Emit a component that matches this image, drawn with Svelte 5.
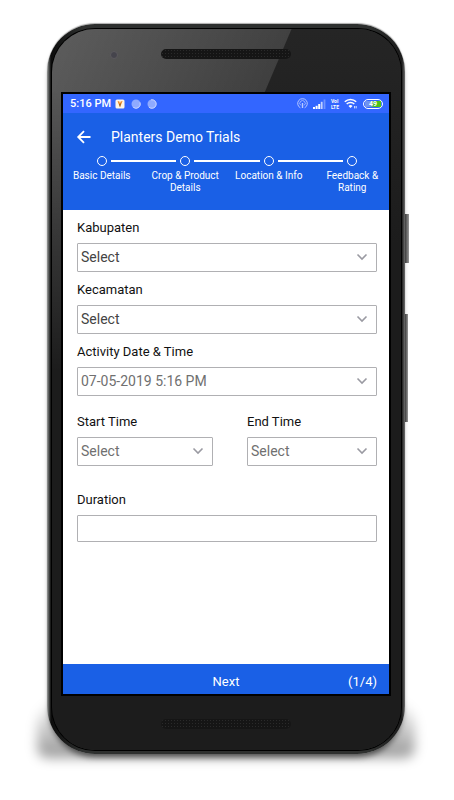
<!--
Planters Demo Trials - activity form, step 1 of 4
Shown inside a phone frame.
-->

<script>
	const steps = ['Basic Details', 'Crop & Product Details', 'Location & Info', 'Feedback & Rating'];

	let kabupaten = $state('Select');
	let kecamatan = $state('Select');
	let activityDate = $state('07-05-2019 5:16 PM');
	let startTime = $state('Select');
	let endTime = $state('Select');
	let duration = $state('');
</script>

{#snippet chevron()}
	<svg class="chevron" width="12" height="8" viewBox="0 0 12 8" aria-hidden="true">
		<path d="M1.5 1.5 6 6l4.5-4.5" fill="none" stroke="#9a9aa2" stroke-width="1.6" />
	</svg>
{/snippet}

<main>
	<div class="phone">
		<span class="side-button power"></span>
		<span class="side-button volume"></span>
		<div class="face">
			<div class="top">
				<span class="camera"></span>
				<span class="speaker"></span>
			</div>

			<div class="screen">
				<div class="status">
					<span class="clock">5:16 PM</span>
					<svg width="10" height="10" viewBox="0 0 10 10" aria-hidden="true">
						<rect x="0.5" y="0.5" width="9" height="9" rx="1.5" fill="#fff5e6" />
						<path d="M2.5 2.2 5 8.2 7.6 2l-2 .4-.6 2-.8-2.2z" fill="#f08a24" />
						<path d="M5 8.2 4.2 5.2l1.6-1z" fill="#7a5a2c" />
					</svg>
					<svg class="ball" width="10" height="10" viewBox="0 0 10 10" aria-hidden="true">
						<circle cx="5" cy="5" r="4.5" fill="#8faaff" />
						<path d="M9 3.4A4.3 4.3 0 0 1 2.4 8.4" fill="none" stroke="#c6d3ff" />
					</svg>
					<svg class="ball" width="10" height="10" viewBox="0 0 10 10" aria-hidden="true">
						<circle cx="5" cy="5" r="4.5" fill="#8faaff" />
						<path d="M4 .8A4.3 4.3 0 1 1 2 8.2" fill="none" stroke="#c6d3ff" />
					</svg>

					<div class="system">
						<svg width="11" height="11" viewBox="0 0 11 11" fill="none" stroke="#b9c9ff" aria-hidden="true">
							<path d="M3.4 9.8a4.8 4.8 0 1 1 4.2 0" />
							<path d="M3.8 7.4a2.7 2.7 0 1 1 3.4 0" stroke-width="0.8" />
							<path d="M5.5 5v5" stroke-width="1.4" />
						</svg>
						<svg width="13" height="10" viewBox="0 0 13 10" fill="#fff" aria-hidden="true">
							<rect x="0" y="8" width="2" height="2" />
							<rect x="2.6" y="6.8" width="2" height="3.2" />
							<rect x="5.2" y="5" width="2" height="5" />
							<rect x="7.8" y="2.8" width="1.8" height="7.2" opacity="0.7" />
							<rect x="10.6" y="0.5" width="1.8" height="9.5" opacity="0.3" />
						</svg>
						<span class="volte"><span>VoI</span><span>LTE</span></span>
						<svg width="14" height="11" viewBox="0 0 14 11" fill="none" stroke="#fff" aria-hidden="true">
							<path d="M.8 3.8a8 8 0 0 1 11.4 0" stroke-width="1.5" />
							<path d="M2.7 6a5.4 5.4 0 0 1 7.6 0" stroke-width="1.4" />
							<path d="M4.5 8a3 3 0 0 1 4 0L6.5 10z" fill="#fff" stroke="none" />
							<path d="M10.6 8v2.4M12.2 8v2.4" stroke-width="0.8" />
						</svg>
						<span class="battery">49</span>
					</div>
				</div>

				<header>
					<div class="title">
						<button class="back" aria-label="Back">
							<svg width="16" height="16" viewBox="0 0 16 16" fill="none" stroke="#fff" stroke-width="1.8">
								<path d="M14.5 8H2.5M8 2.2 2.2 8 8 13.8" />
							</svg>
						</button>
						<h1>Planters Demo Trials</h1>
					</div>
					<ol class="steps">
						{#each steps as step}
							<li>
								<span class="marker"><span class="dot"></span></span>
								<span class="step-label">{step}</span>
							</li>
						{/each}
					</ol>
				</header>

				<form id="details" onsubmit={(e) => e.preventDefault()}>
					<div class="field">
						<label for="kabupaten">Kabupaten</label>
						<div class="control">
							<select id="kabupaten" bind:value={kabupaten}>
								<option>Select</option>
							</select>
							{@render chevron()}
						</div>
					</div>
					<div class="field">
						<label for="kecamatan">Kecamatan</label>
						<div class="control">
							<select id="kecamatan" bind:value={kecamatan}>
								<option>Select</option>
							</select>
							{@render chevron()}
						</div>
					</div>
					<div class="field">
						<label for="activityDate">Activity Date &amp; Time</label>
						<div class="control">
							<select id="activityDate" class="muted" bind:value={activityDate}>
								<option>07-05-2019 5:16 PM</option>
							</select>
							{@render chevron()}
						</div>
					</div>
					<div class="times">
						<div class="field start">
							<label for="startTime">Start Time</label>
							<div class="control">
								<select id="startTime" class="muted" bind:value={startTime}>
									<option>Select</option>
								</select>
								{@render chevron()}
							</div>
						</div>
						<div class="field end">
							<label for="endTime">End Time</label>
							<div class="control">
								<select id="endTime" class="muted" bind:value={endTime}>
									<option>Select</option>
								</select>
								{@render chevron()}
							</div>
						</div>
					</div>
					<div class="field">
						<label for="duration">Duration</label>
						<input id="duration" type="text" bind:value={duration} />
					</div>
				</form>

				<button class="next" type="submit" form="details">
					<span class="next-label">Next</span>
					<span class="count">(1/4)</span>
				</button>
			</div>

			<div class="bottom">
				<span class="speaker"></span>
			</div>
		</div>
	</div>
</main>

<style>
	:global(body) {
		margin: 0;
		background: #fff;
	}

	main {
		display: flex;
		min-height: 100vh;
		box-sizing: border-box;
		padding: 24px 49px 46px 47px;
		font-family: Roboto, 'Liberation Sans', sans-serif;
	}

	/* ---- phone ---- */

	.phone {
		position: relative;
		flex: 1;
		display: flex;
		padding: 5px 4px 4px 5px;
		border-radius: 48px;
		background: linear-gradient(to right, #9a9c9b, #4c4e4d 2px, #0c0c0c 4px, #2e302f 10%, #2e302f 90%, #1c1c1c calc(100% - 3px), #6d6d6d);
		box-shadow:
			0 6px 6px -3px rgba(0, 0, 0, 0.6),
			0 -1px 1px rgba(90, 90, 90, 0.5);
	}

	.phone::before {
		content: '';
		position: absolute;
		z-index: -1;
		right: -10px;
		bottom: -4px;
		left: -10px;
		height: 60px;
		border-radius: 30px 30px 10px 10px;
		background: linear-gradient(rgba(0, 0, 0, 0), rgba(0, 0, 0, 0.4));
		filter: blur(6px);
	}

	.side-button {
		position: absolute;
		z-index: -1;
		left: 100%;
		background: linear-gradient(to right, #444, #999);
	}

	.power {
		top: 190px;
		width: 4px;
		height: 49px;
	}

	.volume {
		top: 290px;
		width: 3px;
		height: 108px;
	}

	.face {
		flex: 1;
		display: flex;
		flex-direction: column;
		padding: 0 10px 0 9px;
		border-radius: 43px;
		box-shadow: 0 0 0 1px #000;
		background:
			linear-gradient(113deg, rgba(255, 255, 255, 0.26) 0, rgba(255, 255, 255, 0.13) 220px, transparent 221px) no-repeat 0 0 / 100% 63px,
			linear-gradient(rgba(255, 255, 255, 0.24), transparent 280px) no-repeat 0 63px / 9px 100%,
			linear-gradient(#252525, #1c1c1c 30%);
	}

	.top {
		display: flex;
		align-items: flex-start;
		height: 63px;
	}

	.camera {
		width: 6px;
		height: 6px;
		margin: 22px 0 0 49px;
		border: 1px solid #5c5a5e;
		border-radius: 50%;
		background: #45444c;
	}

	.speaker {
		width: 130px;
		height: 10px;
		border-radius: 5px;
		background: radial-gradient(#2a2a2a 1px, #151515 1px) 0 0 / 3px 3px;
	}

	.top .speaker {
		margin: 20px 0 0 43px;
	}

	.bottom {
		display: flex;
		justify-content: center;
		height: 54px;
		padding-top: 23px;
		box-sizing: border-box;
	}

	.screen {
		flex: 1;
		display: flex;
		flex-direction: column;
		overflow: hidden;
		border: 2px solid #000;
		background: #fff;
	}

	/* ---- status bar ---- */

	.status {
		display: flex;
		align-items: center;
		height: 19px;
		padding: 0 6px 0 7px;
		background: #3366ff;
		color: #fff;
	}

	.clock {
		margin-right: 4px;
		font-size: 11px;
		font-weight: 500;
		line-height: 12px;
	}

	.ball {
		margin-left: 6px;
	}

	.system {
		display: flex;
		align-items: center;
		gap: 5px;
		margin-left: auto;
	}

	.volte {
		display: flex;
		flex-direction: column;
		font-size: 5px;
		font-weight: 700;
		line-height: 6px;
	}

	.battery {
		width: 18px;
		border: 1px solid #fff;
		border-radius: 5px;
		background: linear-gradient(to right, #6f93f0 5px, #4bc21a 9px) no-repeat center / 16px 6px;
		font-size: 7px;
		font-weight: 700;
		line-height: 8px;
		text-align: center;
	}

	/* ---- header ---- */

	header {
		padding-bottom: 16px;
		background: #1a60e6;
		color: #fff;
	}

	.title {
		display: flex;
		align-items: center;
		height: 47px;
		padding-left: 13px;
	}

	.back {
		display: flex;
		padding: 0;
		border: 0;
		background: none;
	}

	h1 {
		margin: 0 0 0 19px;
		font-size: 14px;
		font-weight: 400;
		line-height: 18px;
	}

	.steps {
		display: flex;
		margin: -4px -5px 0 -3px;
		padding: 0;
		list-style: none;
	}

	.steps li {
		flex: 1 1 0;
		min-width: 0;
		text-align: center;
	}

	.marker {
		display: flex;
		align-items: center;
		gap: 4px;
	}

	.marker::before,
	.marker::after {
		content: '';
		flex: 1;
		height: 2px;
		background: #fff;
	}

	.steps li:first-child .marker::before,
	.steps li:last-child .marker::after {
		background: none;
	}

	.dot {
		box-sizing: border-box;
		width: 10px;
		height: 10px;
		border: 1px solid #fff;
		border-radius: 50%;
	}

	.step-label {
		display: block;
		margin-top: 4px;
		padding: 0 5px;
		font-size: 10px;
		line-height: 12px;
	}

	/* ---- form ---- */

	form {
		flex: 1;
		display: flex;
		flex-direction: column;
		gap: 9px;
		padding: 9px 12px 9px 14px;
	}

	.field {
		display: flex;
		flex-direction: column;
		gap: 6px;
	}

	.times {
		display: flex;
		gap: 34px;
		padding: 8px 0 16px;
	}

	.start {
		flex: 136 1 0;
	}

	.end {
		flex: 130 1 0;
	}

	label {
		color: #111;
		font-size: 13px;
		line-height: 18px;
	}

	.control {
		position: relative;
		display: flex;
	}

	select,
	input {
		box-sizing: border-box;
		width: 100%;
		height: 29px;
		margin: 0;
		padding: 0 3px 2px;
		border: 1px solid #b0b0b3;
		border-radius: 1px;
		appearance: none;
		background: #fff;
		color: #444;
		font-family: inherit;
		font-size: 14px;
	}

	input {
		height: 27px;
	}

	select.muted {
		color: #707070;
	}

	.chevron {
		position: absolute;
		top: 10px;
		right: 9px;
		pointer-events: none;
	}

	/* ---- footer ---- */

	.next {
		display: grid;
		grid-template-columns: 1fr auto 1fr;
		align-items: center;
		height: 30px;
		padding: 5px 12px 0;
		border: 0;
		background: #1a60e6;
		color: #fff;
		font-family: inherit;
		font-size: 13px;
		line-height: 18px;
	}

	.next-label {
		grid-column: 2;
	}

	.count {
		justify-self: end;
	}
</style>
